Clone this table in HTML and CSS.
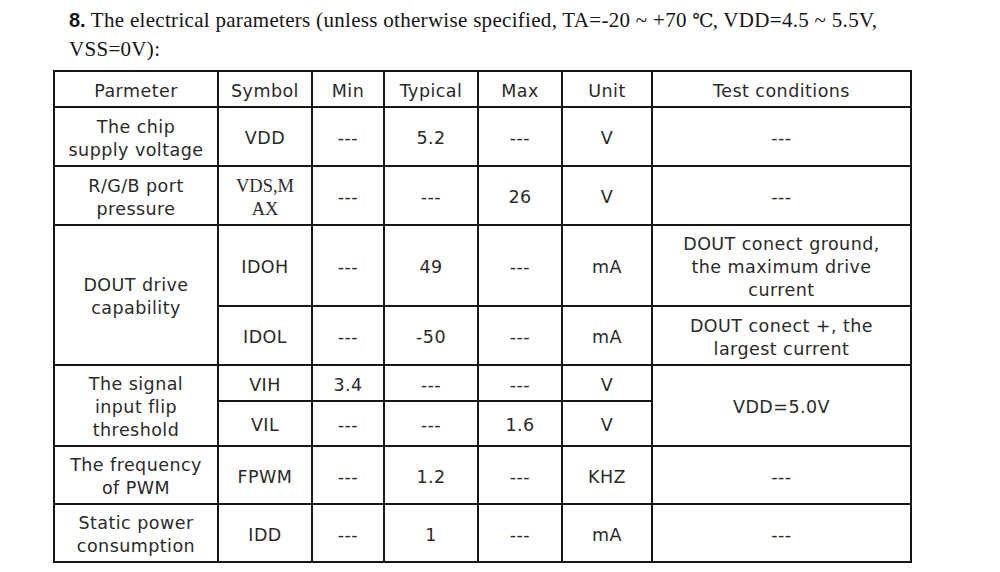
FILE: index.html
```html
<!DOCTYPE html>
<html>
<head>
<meta charset="utf-8">
<link rel="stylesheet" href="styles.css">
</head>
<body>
<div class="page">
  <p class="title"><span class="num">8.</span> The electrical parameters (unless otherwise specified, TA=-20 ~ +70 <span class="deg">℃</span>, VDD=4.5 ~ 5.5V,<br>VSS=0V):</p>
  <table class="params">
    <colgroup>
      <col class="c-param"><col class="c-sym"><col class="c-min"><col class="c-typ"><col class="c-max"><col class="c-unit"><col class="c-test">
    </colgroup>
    <tr class="r-head">
      <td>Parmeter</td><td>Symbol</td><td>Min</td><td>Typical</td><td>Max</td><td>Unit</td><td>Test conditions</td>
    </tr>
    <tr class="r-59">
      <td>The chip<br>supply voltage</td><td>VDD</td><td>---</td><td>5.2</td><td>---</td><td>V</td><td>---</td>
    </tr>
    <tr class="r-59">
      <td>R/G/B port<br>pressure</td><td class="serif">VDS,M<br>AX</td><td>---</td><td>---</td><td>26</td><td>V</td><td>---</td>
    </tr>
    <tr class="r-81">
      <td rowspan="2">DOUT drive<br>capability</td><td>IDOH</td><td>---</td><td>49</td><td>---</td><td>mA</td><td>DOUT conect ground,<br>the maximum drive<br>current</td>
    </tr>
    <tr class="r-59">
      <td>IDOL</td><td>---</td><td>-50</td><td>---</td><td>mA</td><td>DOUT conect +, the<br>largest current</td>
    </tr>
    <tr class="r-36">
      <td rowspan="2">The signal<br>input flip<br>threshold</td><td>VIH</td><td>3.4</td><td>---</td><td>---</td><td>V</td><td rowspan="2">VDD=5.0V</td>
    </tr>
    <tr class="r-45">
      <td>VIL</td><td>---</td><td>---</td><td>1.6</td><td>V</td>
    </tr>
    <tr class="r-58">
      <td>The frequency<br>of PWM</td><td>FPWM</td><td>---</td><td>1.2</td><td>---</td><td>KHZ</td><td>---</td>
    </tr>
    <tr class="r-58">
      <td>Static power<br>consumption</td><td>IDD</td><td>---</td><td>1</td><td>---</td><td>mA</td><td>---</td>
    </tr>
  </table>
</div>
</body>
</html>
```
FILE: styles.css
```css
html, body {
  margin: 0;
  padding: 0;
  background: #ffffff;
}
.page {
  padding-top: 6px;
}
.title {
  margin: 0 0 0 69px;
  font-family: "Liberation Serif", "DejaVu Serif", "Noto Sans CJK SC", serif;
  font-size: 21px;
  line-height: 28px;
  letter-spacing: 0.3px;
  color: #141414;
  white-space: nowrap;
}
.title .num {
  font-family: "Liberation Sans", Arial, sans-serif;
  font-weight: bold;
  font-size: 20px;
  letter-spacing: 0;
}
.title .deg {
  font-size: 19px;
  letter-spacing: -1px;
}
.params {
  margin: 7px 0 0 53px;
  border-collapse: collapse;
  table-layout: fixed;
  width: 858px;
  font-family: "DejaVu Sans", sans-serif;
  font-size: 17.5px;
  line-height: 23px;
  letter-spacing: 0.45px;
  color: #2a2a2a;
}
.params td {
  border: 2px solid #161616;
  padding: 4px 0 0 0;
  text-align: center;
  vertical-align: middle;
}
.params td.serif {
  font-family: "Liberation Serif", serif;
  font-size: 18.5px;
  letter-spacing: 0;
}
.c-param { width: 164px; }
.c-sym { width: 94px; }
.c-min { width: 72px; }
.c-typ { width: 94px; }
.c-max { width: 84px; }
.c-unit { width: 90px; }
.c-test { width: 259px; }
.r-head { height: 36px; }
.r-36 { height: 36px; }
.r-45 { height: 45px; }
.r-58 { height: 58px; }
.r-59 { height: 59px; }
.r-81 { height: 81px; }
```
